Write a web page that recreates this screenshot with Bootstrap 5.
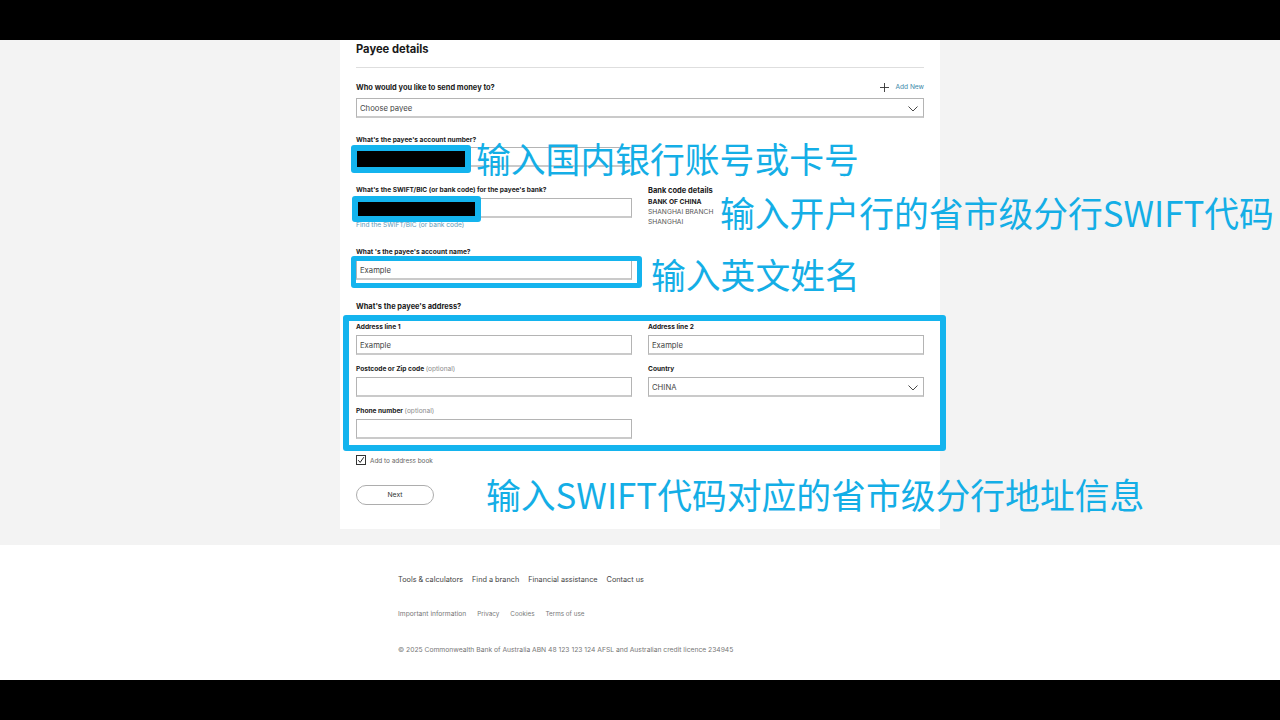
<!DOCTYPE html>
<html lang="en">
<head>
<meta charset="utf-8">
<title>Payee details</title>
<link href="https://cdn.jsdelivr.net/npm/bootstrap@5.3.0/dist/css/bootstrap.min.css" rel="stylesheet">
<style>
html,body{height:720px;overflow:hidden;background:#000}
body{font-family:Inter,"Liberation Sans",sans-serif;color:#1a1a1a;position:relative}
.bar-blk{height:40px;background:#000}
.main-area{height:505px;background:#f3f3f3}
.panel{width:600px;height:489px;margin-left:340px;background:#fff;padding:0 16px}
.head-row{height:27.5px;border-bottom:1px solid #dedede;padding-top:3px}
.head-txt{font-size:11.2px;font-weight:700;margin:0;line-height:13px}
.lbl{font-size:6.6px;font-weight:700;line-height:9px;margin:0;padding-top:1px;display:block;color:#1a1a1a}
.lbl-big{font-size:7.45px;font-weight:700;line-height:10px;margin:0;color:#1a1a1a}
.opt{font-weight:400;color:#8b8b8b}
.form-control.fld,.form-select.fld{height:20px;min-height:0;font-size:7.7px;line-height:1;padding:3px 3px 0;border:1px solid #b4b4b4;border-bottom:2px solid #cacaca;border-radius:0;color:#444;background-color:#fff}
.form-control.fld::placeholder{color:#444;opacity:1}
.form-select.fld{background-image:url("data:image/svg+xml,%3csvg xmlns='http://www.w3.org/2000/svg' viewBox='0 0 10 6'%3e%3cpath fill='none' stroke='%23333' stroke-width='.9' d='M.5.5 5 5l4.5-4.5'/%3e%3c/svg%3e");background-position:right 5px top 7px;background-size:10px 6px}
.who-row{padding-bottom:5px}
.add-new{font-size:6.6px;color:#3a87a8;text-decoration:none;gap:6px}
.find-lnk{font-size:6.6px;line-height:9px;color:#5c9ab8;text-decoration:none;display:block;margin-top:3px}
.code-ttl{font-size:7.5px;font-weight:700;line-height:10px;margin:0 0 1px;padding-top:1px;color:#1a1a1a}
.code-line{font-size:6.7px;line-height:10px;margin:0;color:#555}
.code-line.strong{font-weight:700;color:#1a1a1a}
.gap-e{margin-top:12px}
.addr-cell{margin-bottom:8px}
.tick{width:10px;height:10px;border:1px solid #333;display:flex;align-items:center;justify-content:center;background:#fff}
.tick-txt{font-size:6.4px;color:#666;line-height:10px;padding-top:1px}
.next-btn{width:78px;height:20px;border:1px solid #adadad;border-radius:10px;background:#fff;font-size:6.8px;line-height:1;padding:2px 0 0;color:#333}
.foot-area{height:135px;background:#fff;padding:30px 0 0 398px}
.foot-main{font-size:7.3px;line-height:10px;gap:9px;color:#444}
.foot-sub{font-size:6.3px;line-height:9px;gap:11px;color:#777;margin-top:25px}
.foot-sub span:first-child{font-size:6.7px}
.foot-copy{font-size:6.74px;line-height:9px;color:#777;margin:26px 0 0}
.mark-box{position:absolute;border-style:solid;border-color:#14b4ee;border-radius:3px}
.box1{left:351px;top:145px;width:120px;height:28px;border-width:6px;background:#000}
.box2{left:352px;top:196px;width:129px;height:26px;border-width:6px;background:#000}
.box3{left:351px;top:256px;width:291px;height:32px;border-width:5px}
.box4{left:343px;top:315px;width:603px;height:136px;border-width:6px}
.note{position:absolute;margin:0;color:#14aee6;font-family:"Noto Sans CJK SC","Noto Sans",sans-serif;font-size:34.8px;line-height:40px;white-space:nowrap;font-weight:400}
.n1{left:476px;top:138px}
.n2{left:720px;top:192px}
.n3{left:651px;top:254px}
.n4{left:486px;top:474px}
</style>
</head>
<body>
<div class="bar-blk"></div>
<main class="main-area">
  <div class="panel">
    <div class="head-row"><h1 class="head-txt">Payee details</h1></div>
    <div class="d-flex justify-content-between align-items-end gap-e who-row" style="height:18px">
      <label class="lbl-big">Who would you like to send money to?</label>
      <a class="add-new d-flex align-items-center" href="#">
        <svg width="9" height="9" viewBox="0 0 10 10"><path d="M5 0v10M0 5h10" stroke="#333" stroke-width="1" fill="none"/></svg>Add New</a>
    </div>
    <select class="form-select fld"><option>Choose payee</option></select>
    <div style="margin-top:17px">
      <label class="lbl" style="margin-bottom:2px">What's the payee's account number?</label>
      <div class="row gx-3"><div class="col-6"><input class="form-control fld" type="text"></div></div>
    </div>
    <div class="row gx-3" style="margin-top:18px">
      <div class="col-6">
        <label class="lbl" style="margin-bottom:3px">What's the SWIFT/BIC (or bank code) for the payee's bank?</label>
        <input class="form-control fld" type="text">
        <a class="find-lnk" href="#">Find the SWIFT/BIC (or bank code)</a>
      </div>
      <div class="col-6">
        <p class="code-ttl">Bank code details</p>
        <p class="code-line strong">BANK OF CHINA</p>
        <p class="code-line">SHANGHAI BRANCH</p>
        <p class="code-line">SHANGHAI</p>
      </div>
    </div>
    <div style="margin-top:17px">
      <label class="lbl" style="margin-bottom:3px">What 's the payee's account name?</label>
      <div class="row gx-3"><div class="col-6"><input class="form-control fld" type="text" placeholder="Example"></div></div>
    </div>
    <p class="lbl-big" style="margin-top:22px">What's the payee's address?</p>
    <div class="row gx-3" style="margin-top:10px">
      <div class="col-6 addr-cell"><label class="lbl" style="margin-bottom:3px">Address line 1</label><input class="form-control fld" type="text" placeholder="Example"></div>
      <div class="col-6 addr-cell"><label class="lbl" style="margin-bottom:3px">Address line 2</label><input class="form-control fld" type="text" placeholder="Example"></div>
      <div class="col-6 addr-cell" style="margin-top:1px"><label class="lbl" style="margin-bottom:3px">Postcode or Zip code <span class="opt">(optional)</span></label><input class="form-control fld" type="text"></div>
      <div class="col-6 addr-cell" style="margin-top:1px"><label class="lbl" style="margin-bottom:3px">Country</label><select class="form-select fld"><option>CHINA</option></select></div>
      <div class="col-6 addr-cell" style="margin-top:1px"><label class="lbl" style="margin-bottom:3px">Phone number <span class="opt">(optional)</span></label><input class="form-control fld" type="text"></div>
    </div>
    <div class="d-flex align-items-center gap-1" style="margin-top:8px">
      <span class="tick"><svg width="8" height="8" viewBox="0 0 8 8"><path d="M1.2 4.2 3.2 6.4 6.8 1.2" stroke="#222" stroke-width="1" fill="none"/></svg></span>
      <span class="tick-txt">Add to address book</span>
    </div>
    <button class="next-btn d-block" style="margin-top:19px" type="button">Next</button>
  </div>
</main>
<footer class="foot-area">
  <div class="d-flex foot-main"><span>Tools &amp; calculators</span><span>Find a branch</span><span>Financial assistance</span><span>Contact us</span></div>
  <div class="d-flex foot-sub"><span>Important information</span><span>Privacy</span><span>Cookies</span><span>Terms of use</span></div>
  <p class="foot-copy">© 2025 Commonwealth Bank of Australia ABN 48 123 123 124 AFSL and Australian credit licence 234945</p>
</footer>
<div class="bar-blk"></div>

<div class="mark-box box1"></div>
<div class="mark-box box2"></div>
<div class="mark-box box3"></div>
<div class="mark-box box4"></div>
<p class="note n1">输入国内银行账号或卡号</p>
<p class="note n2">输入开户行的省市级分行SWIFT代码</p>
<p class="note n3">输入英文姓名</p>
<p class="note n4">输入SWIFT代码对应的省市级分行地址信息</p>
<script src="https://cdn.jsdelivr.net/npm/bootstrap@5.3.0/dist/js/bootstrap.bundle.min.js"></script>
</body>
</html>
